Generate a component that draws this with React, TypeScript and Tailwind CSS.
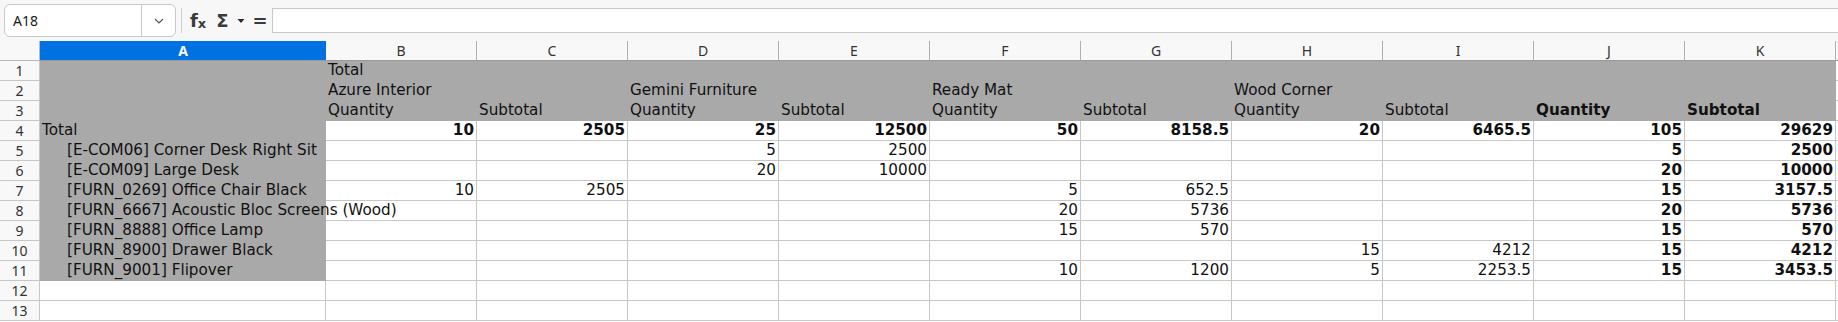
import React from "react";

type Cell = { v: string; bold?: boolean };

const COLS = ["B", "C", "D", "E", "F", "G", "H", "I", "J", "K"];

// Pivot header rows (1-3), columns B..K
const headerRows: (Cell | null)[][] = [
  [{ v: "Total" }, null, null, null, null, null, null, null, null, null],
  [
    { v: "Azure Interior" },
    null,
    { v: "Gemini Furniture" },
    null,
    { v: "Ready Mat" },
    null,
    { v: "Wood Corner" },
    null,
    null,
    null,
  ],
  [
    { v: "Quantity" },
    { v: "Subtotal" },
    { v: "Quantity" },
    { v: "Subtotal" },
    { v: "Quantity" },
    { v: "Subtotal" },
    { v: "Quantity" },
    { v: "Subtotal" },
    { v: "Quantity", bold: true },
    { v: "Subtotal", bold: true },
  ],
];

type DataRow = { label: string; indent: boolean; values: (string | null)[]; boldAll?: boolean };

const dataRows: DataRow[] = [
  {
    label: "Total",
    indent: false,
    boldAll: true,
    values: ["10", "2505", "25", "12500", "50", "8158.5", "20", "6465.5", "105", "29629"],
  },
  {
    label: "[E-COM06] Corner Desk Right Sit",
    indent: true,
    values: [null, null, "5", "2500", null, null, null, null, "5", "2500"],
  },
  {
    label: "[E-COM09] Large Desk",
    indent: true,
    values: [null, null, "20", "10000", null, null, null, null, "20", "10000"],
  },
  {
    label: "[FURN_0269] Office Chair Black",
    indent: true,
    values: ["10", "2505", null, null, "5", "652.5", null, null, "15", "3157.5"],
  },
  {
    label: "[FURN_6667] Acoustic Bloc Screens (Wood)",
    indent: true,
    values: [null, null, null, null, "20", "5736", null, null, "20", "5736"],
  },
  {
    label: "[FURN_8888] Office Lamp",
    indent: true,
    values: [null, null, null, null, "15", "570", null, null, "15", "570"],
  },
  {
    label: "[FURN_8900] Drawer Black",
    indent: true,
    values: [null, null, null, null, null, null, "15", "4212", "15", "4212"],
  },
  {
    label: "[FURN_9001] Flipover",
    indent: true,
    values: [null, null, null, null, "10", "1200", "5", "2253.5", "15", "3453.5"],
  },
];

const cellFont = { fontFamily: '"DejaVu Sans", Verdana, sans-serif' };
const uiFont = { fontFamily: '"Noto Sans", "DejaVu Sans", sans-serif' };

function RowHead({ n }: { n: number }) {
  return (
    <div
      className="w-[40px] shrink-0 h-[20px] bg-[#f8f8f8] border-b border-r border-[#c6c6c6] flex items-center justify-center text-[14px] leading-none text-[#333333]"
      style={uiFont}
    >
      {n}
    </div>
  );
}

function Toolbar() {
  return (
    <div className="h-[41px] bg-[#f7f7f7] flex items-center" style={uiFont}>
      {/* name box */}
      <div className="ml-[4px] w-[172px] h-[33px] bg-white border border-[#c8c8c8] rounded-[6px] flex items-stretch">
        <div className="flex-1 flex items-center pl-[8px] text-[14px] text-[#1a1a1a]">A18</div>
        <div className="w-[34px] border-l border-[#c8c8c8] flex items-center justify-center">
          <svg width="12" height="8" viewBox="0 0 12 8">
            <polyline points="2,2 6,6 10,2" fill="none" stroke="#555" strokeWidth="1.2" />
          </svg>
        </div>
      </div>
      {/* separator */}
      <div className="ml-[5px] w-px h-[25px] bg-[#cfcfcf]" />
      {/* function wizard */}
      <div className="ml-[8px] flex items-end text-[#3a3a3a] font-bold leading-none" style={cellFont}>
        <span className="text-[18px]">f</span>
        <span className="text-[13px]">x</span>
      </div>
      {/* sum */}
      <div className="ml-[10px] text-[18px] font-bold text-[#3a3a3a] leading-none" style={cellFont}>
        Σ
      </div>
      <svg className="ml-[8px]" width="8" height="6" viewBox="0 0 8 6">
        <polygon points="0.5,1 7.5,1 4,5" fill="#2a2a2a" />
      </svg>
      {/* equals */}
      <div className="ml-[8px] text-[18px] font-bold text-[#3a3a3a] leading-none" style={cellFont}>
        =
      </div>
      {/* formula input */}
      <div className="ml-[4px] flex-1 h-[25px] bg-white border-y border-l border-[#c8c8c8]" />
    </div>
  );
}

function ColumnHeader() {
  return (
    <div className="flex h-[20px]" style={uiFont}>
      <div className="w-[40px] shrink-0 bg-[#f8f8f8] border-b border-r border-[#b8b8b8]" />
      <div className="w-[286px] shrink-0 bg-[#0071e1] border-b border-[#9a9a9a] flex items-center justify-center text-[14px] font-bold text-white">
        A
      </div>
      {COLS.map((c) => (
        <div
          key={c}
          className="w-[151px] shrink-0 bg-[#f8f8f8] border-b border-r border-b-[#9a9a9a] border-r-[#b0b0b0] flex items-center justify-center text-[14px] text-[#333333]"
        >
          {c}
        </div>
      ))}
      <div className="flex-1 bg-[#f8f8f8] border-b border-[#9a9a9a]" />
    </div>
  );
}

function Text({ c }: { c: Cell | null }) {
  if (!c) return null;
  return <span className={c.bold ? "font-bold" : ""}>{c.v}</span>;
}

export default function App() {
  return (
    <div className="w-[1838px] h-[322px] overflow-hidden bg-white text-black">
      <Toolbar />
      <ColumnHeader />
      <div className="text-[15.2px] leading-[19px]" style={cellFont}>
        {/* pivot header rows */}
        {headerRows.map((row, i) => (
          <div key={i} className="flex h-[20px]">
            <RowHead n={i + 1} />
            <div className="w-[286px] shrink-0 bg-[#a9a9a9]" />
            {row.map((c, j) => (
              <div
                key={j}
                className="w-[151px] shrink-0 bg-[#a9a9a9] px-[2px] whitespace-nowrap overflow-visible text-[#111111]"
              >
                <Text c={c} />
              </div>
            ))}
            <div className="flex-1 border-b border-[#c6c6c6]" />
          </div>
        ))}
        {/* data rows */}
        {dataRows.map((r, i) => (
          <div key={r.label} className="flex h-[20px]">
            <RowHead n={i + 4} />
            <div
              className={
                "w-[286px] shrink-0 bg-[#a9a9a9] whitespace-nowrap overflow-visible text-[#111111] " +
                (r.indent ? "pl-[27px]" : "pl-[2px]")
              }
            >
              {r.label}
            </div>
            {r.values.map((v, j) => (
              <div
                key={j}
                className={
                  "w-[151px] shrink-0 h-[20px] border-b border-r border-[#c6c6c6] pr-[2px] text-right whitespace-nowrap text-[#111111] " +
                  (r.boldAll || j >= 8 ? "font-bold" : "")
                }
              >
                {v}
              </div>
            ))}
            <div className="flex-1 border-b border-[#c6c6c6]" />
          </div>
        ))}
        {/* empty rows */}
        {[12, 13].map((n) => (
          <div key={n} className="flex h-[20px]">
            <RowHead n={n} />
            <div className="w-[286px] shrink-0 border-b border-r border-[#c6c6c6]" />
            {COLS.map((c) => (
              <div key={c} className="w-[151px] shrink-0 border-b border-r border-[#c6c6c6]" />
            ))}
            <div className="flex-1 border-b border-[#c6c6c6]" />
          </div>
        ))}
      </div>
    </div>
  );
}
